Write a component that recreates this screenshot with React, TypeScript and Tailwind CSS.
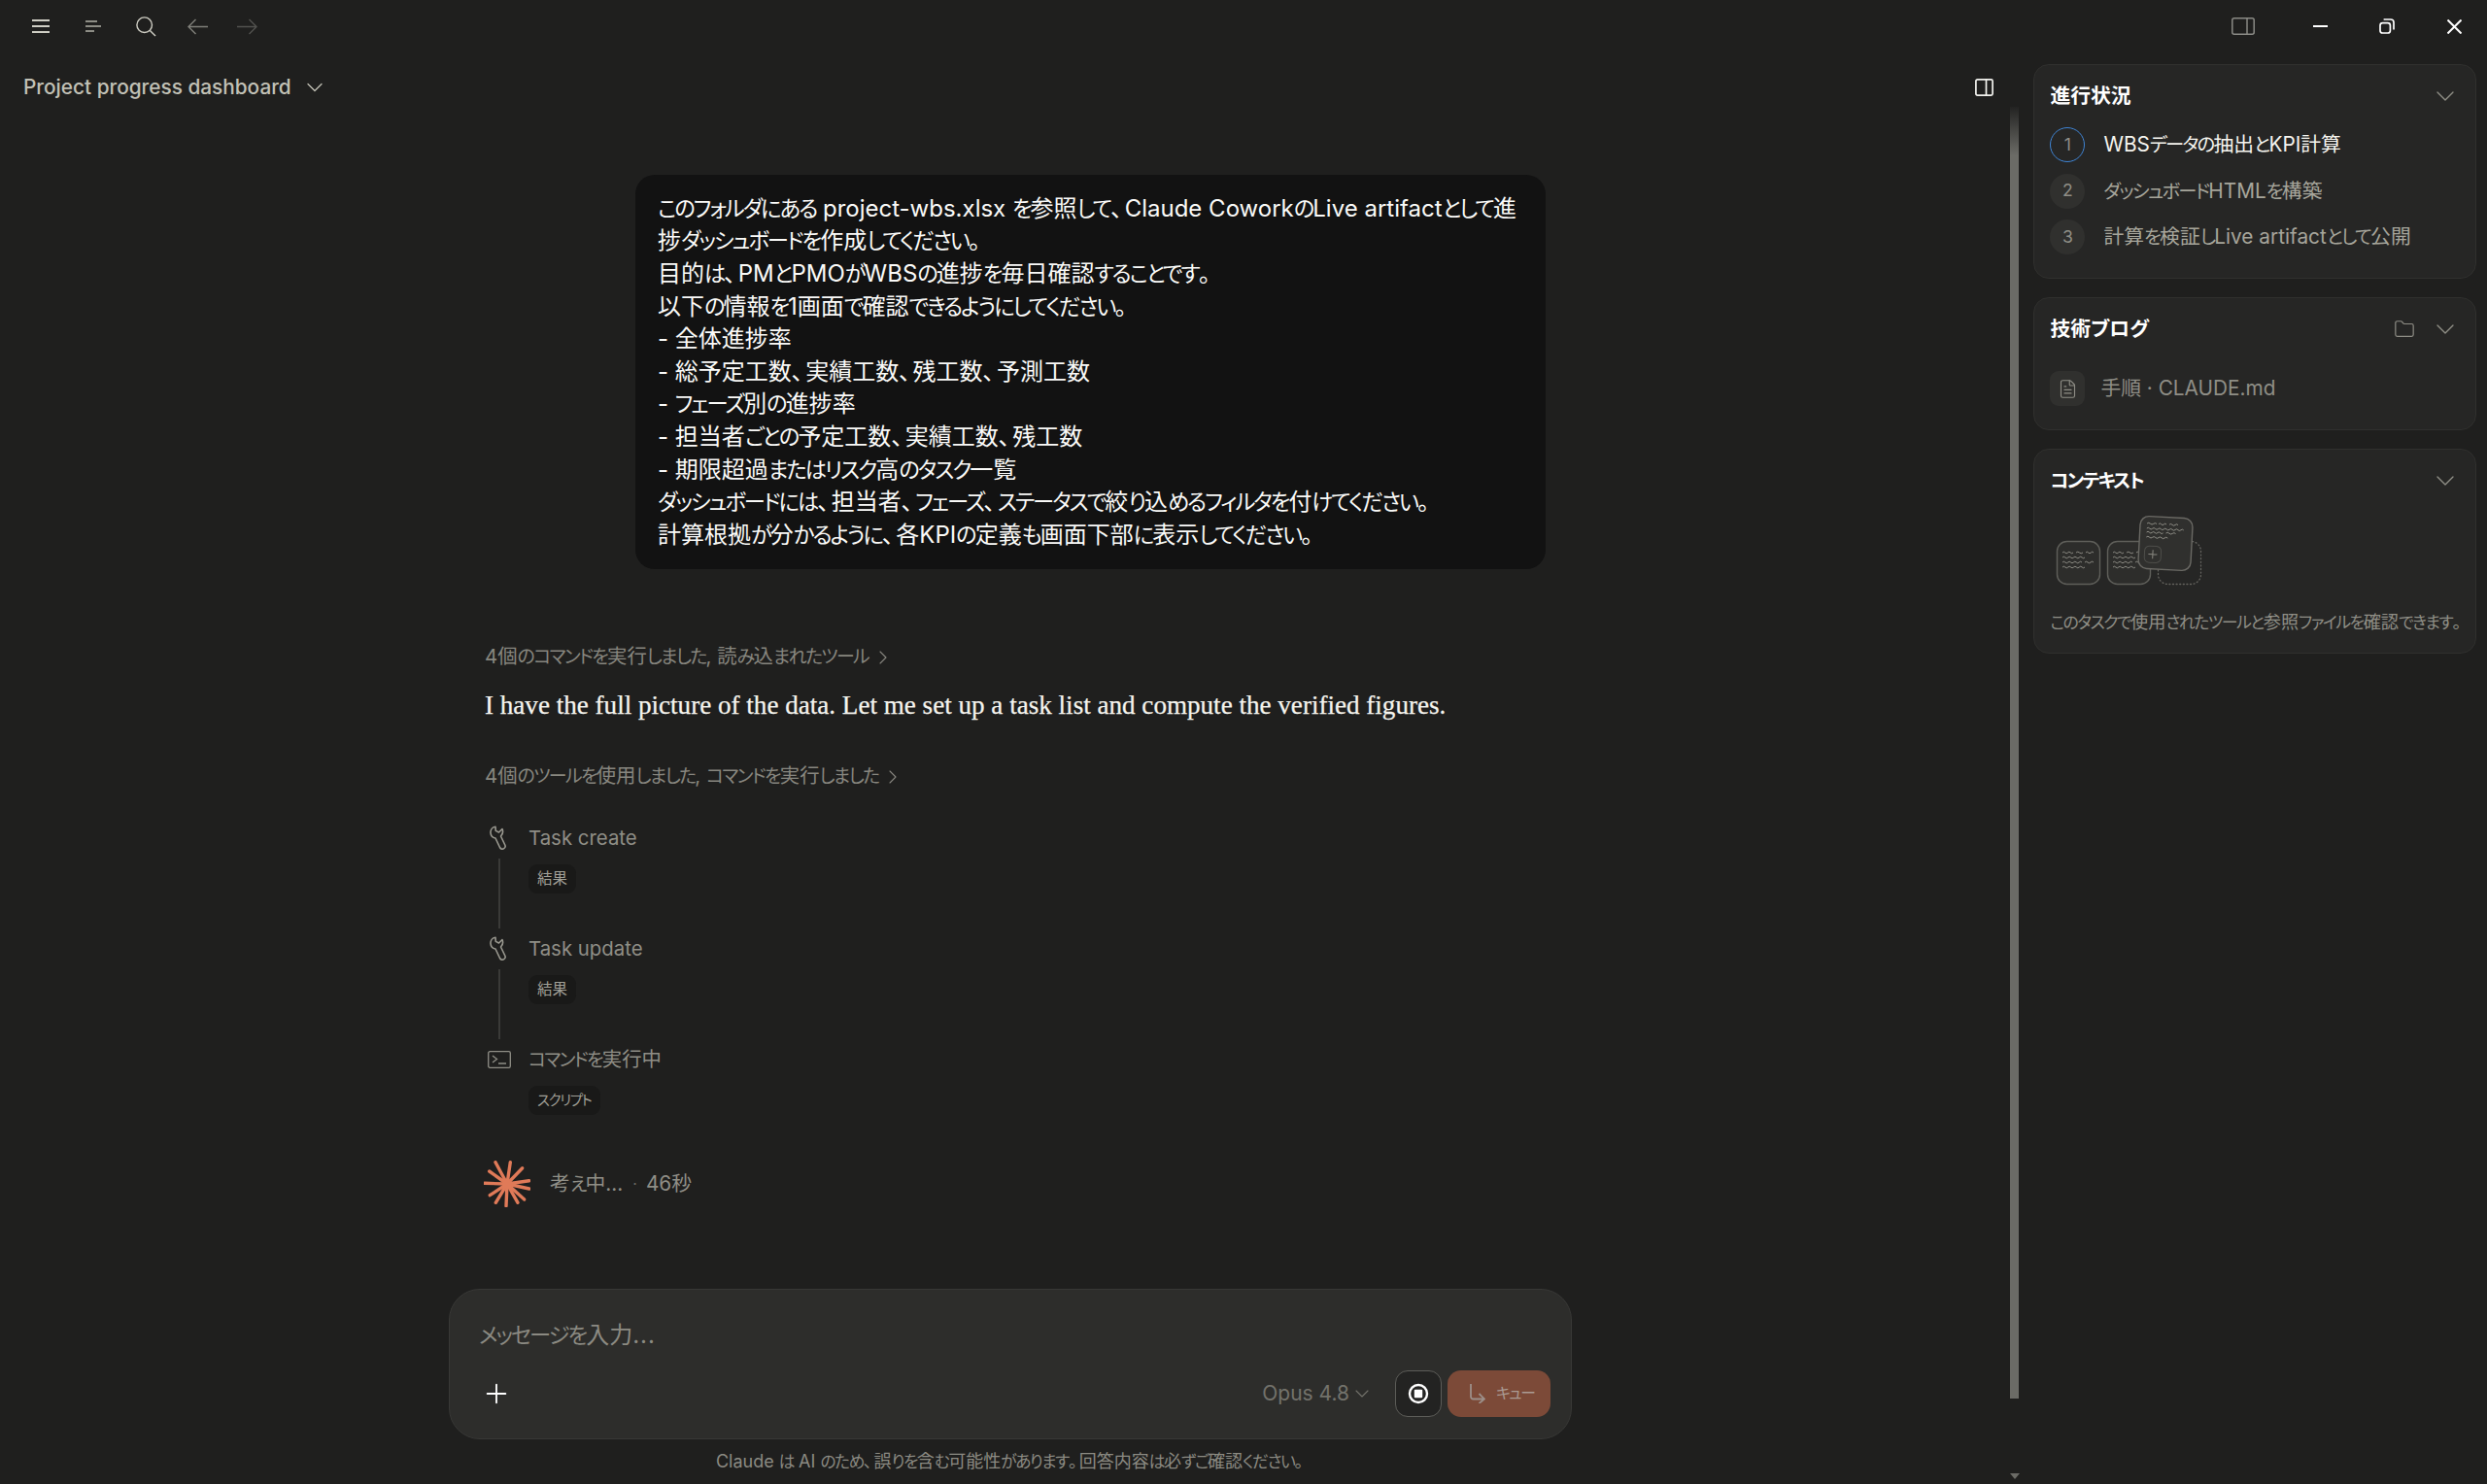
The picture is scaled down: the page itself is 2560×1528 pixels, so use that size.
import React from "react";
import { ChevronDown, ChevronRight, Plus, FileText, Folder } from "lucide-react";

function J({ t }: { t: string }) {
  return (
    <>
      {t.split(/([\u3041-\u30ff]+|[、。])/).map((s, i) =>
        i % 2 === 0 ? (
          <React.Fragment key={i}>{s}</React.Fragment>
        ) : s === "、" || s === "。" ? (
          <span key={i} className="mr-[0.1em]">{s}</span>
        ) : (
          <span key={i} className="text-[0.93em] tracking-[-0.09em]">{s}</span>
        )
      )}
    </>
  );
}

const prompt = [
  "このフォルダにある project-wbs.xlsx を参照して、Claude CoworkのLive artifactとして進",
  "捗ダッシュボードを作成してください。",
  "目的は、PMとPMOがWBSの進捗を毎日確認することです。",
  "以下の情報を1画面で確認できるようにしてください。",
  "- 全体進捗率",
  "- 総予定工数、実績工数、残工数、予測工数",
  "- フェーズ別の進捗率",
  "- 担当者ごとの予定工数、実績工数、残工数",
  "- 期限超過またはリスク高のタスク一覧",
  "ダッシュボードには、担当者、フェーズ、ステータスで絞り込めるフィルタを付けてください。",
  "計算根拠が分かるように、各KPIの定義も画面下部に表示してください。",
];

const rays: [number, number][] = [
  [-12, -22.3], [3.3, -22.3], [15.7, -16.3], [22.7, -3.3], [22.7, 5], [17.7, 16],
  [11, 19.3], [-1, 22.7], [-11.7, 19.3], [-17.7, 11.7], [-23.3, -0.7], [-18.3, -13],
];

function wave(x: number, y: number, w: number) {
  const n = Math.max(1, Math.round(w / 3));
  let d = `M${x} ${y}q${w / n / 2} -1.6 ${w / n} 0`;
  for (let i = 1; i < n; i++) d += `t${w / n} 0`;
  return d;
}

function Lines({ segs }: { segs: [number, number, number][] }) {
  return (
    <path
      d={segs.map(([a, b, y]) => wave(a, y, b - a)).join("")}
      fill="none"
      stroke="#a3a299"
      strokeWidth="0.8"
    />
  );
}

const small = (o: number): [number, number, number][] => [
  [14 + o, 25 + o, 44], [28 + o, 35 + o, 44], [38 + o, 46 + o, 44],
  [14 + o, 37 + o, 49],
  [14 + o, 34 + o, 54], [37 + o, 46 + o, 54],
  [14 + o, 37 + o, 59],
];

function Illustration() {
  return (
    <svg width="160" height="80" viewBox="0 0 160 80" className="-ml-[1px]">
      <rect x="8.5" y="32.5" width="44" height="44" rx="10" fill="#2d2d2b" stroke="#5f5f5a" strokeWidth="1.4" />
      <Lines segs={small(0)} />
      <rect x="60.5" y="32.5" width="44" height="44" rx="10" fill="#2d2d2b" stroke="#5f5f5a" strokeWidth="1.4" />
      <Lines segs={small(52)} />
      <rect x="112.5" y="32.5" width="44" height="44" rx="10" fill="none" stroke="#65645f" strokeWidth="1.3" strokeDasharray="1 2.6" strokeLinecap="round" />
      <g transform="rotate(3 120 35)">
        <rect x="93" y="7.5" width="54" height="54" rx="9" fill="#30302e" stroke="#6a6964" strokeWidth="1.4" />
        <Lines segs={[[100, 110, 15], [112, 120, 15], [123, 132, 15], [100, 138, 20], [100, 117, 24], [120, 130, 24], [100, 122, 29]]} />
        <rect x="99" y="38" width="17" height="17" rx="5" fill="none" stroke="#4e4e4a" strokeWidth="1" />
        <path d="M107.5 42v9M103 46.5h9" stroke="#8a8982" strokeWidth="1" />
      </g>
    </svg>
  );
}

function Tool({ icon, label, tag, line }: { icon: React.ReactNode; label: string; tag: string; line?: boolean }) {
  return (
    <div className="flex h-[114px]">
      <div className="flex w-[30px] flex-col items-center">
        <div className="flex h-[30px] items-center justify-center">{icon}</div>
        {line && <div className="mt-[6px] h-[72px] w-[2px] bg-[#3a3a38]" />}
      </div>
      <div className="ml-[15px] flex flex-col items-start">
        <div className="flex h-[30px] items-center pt-[2px] text-[20.4px] text-[#8f8e86]"><span><J t={label} /></span></div>
        <div className="mt-[12px] flex h-[30px] items-center rounded-[9px] bg-[#191918] px-[9px] text-[15.5px] text-[#a09f96]"><span><J t={tag} /></span></div>
      </div>
    </div>
  );
}

function CardHead({ title, extra }: { title: React.ReactNode; extra?: React.ReactNode }) {
  return (
    <div className="flex h-[32px] items-center">
      <span className="text-[20.8px] font-semibold text-white">{title}</span>
      <div className="ml-auto flex items-center">
        {extra}
        <ChevronDown size={32} strokeWidth={1} className="text-[#8f8e86]" />
      </div>
    </div>
  );
}

const WrenchIcon = () => (
  <svg width="17" height="25" viewBox="0 0 17 25" fill="none" stroke="#9a9990" strokeWidth="1.6" strokeLinejoin="round" className="mr-[3px]">
    <path d="M6 1.2C2.6 1.6.8 4.5 1 7.5c.2 3 2.4 5 5 5.5l4.5 9.5c.8 1.5 2.5 2 4 1.3 1.5-.8 2-2.3 1.3-3.8L11.5 11c2-2 2.5-5 1.5-7.5L9.5 7 6.3 5.4z" />
  </svg>
);

const card = "rounded-[16px] border-[1.6px] border-[#30302e] bg-[#262625] pt-[16px] pl-[16.4px] pr-[15px]";

export default function App() {
  return (
    <div className="flex h-[1528px] w-[2560px] flex-col overflow-hidden bg-[#1f1f1e] font-[Inter,'Noto_Sans_CJK_JP',sans-serif] [font-feature-settings:'palt'] text-white">
      {/* title bar */}
      <header className="flex h-[54px] shrink-0 items-center pl-[33px] pr-[26px]">
        <svg width="18" height="16" viewBox="0 0 18 16" stroke="#cfcec4" strokeWidth="2">
          <path d="M0 2h18M0 8h18M0 14h18" />
        </svg>
        <svg width="16" height="14" viewBox="0 0 16 14" className="ml-[37px]" stroke="#b3b2a8" strokeWidth="1.3">
          <path d="M0 2h12M0 7h16M0 12h9" />
        </svg>
        <svg width="21" height="21" viewBox="0 0 21 21" fill="none" stroke="#cfcec4" strokeWidth="1.4" className="ml-[36px]">
          <circle cx="8.7" cy="8.7" r="7.8" />
          <path d="M14.4 14.4L20 20" />
        </svg>
        <svg width="21" height="17" viewBox="0 0 21 17" fill="none" stroke="#80807a" strokeWidth="1.4" className="ml-[32px]">
          <path d="M21 8.5H1M8.5 1L1 8.5L8.5 16" />
        </svg>
        <svg width="21" height="17" viewBox="0 0 21 17" fill="none" stroke="#52524f" strokeWidth="1.4" className="ml-[30px]">
          <path d="M0 8.5h20M12.5 1L20 8.5L12.5 16" />
        </svg>
        <svg width="24" height="18" viewBox="0 0 24 18" fill="none" stroke="#8a8a85" strokeWidth="1.5" className="ml-auto">
          <rect x="0.8" y="0.8" width="22.4" height="16.4" rx="2" />
          <path d="M16 1v16" />
        </svg>
        <svg width="15" height="4" viewBox="0 0 15 4" stroke="#fff" strokeWidth="2" className="ml-[60px]">
          <path d="M0 2h15" />
        </svg>
        <svg width="16" height="16" viewBox="0 0 16 16" fill="none" stroke="#fff" strokeWidth="1.7" className="ml-[53px]">
          <rect x="1" y="4.6" width="10.4" height="10.4" rx="2.6" />
          <path d="M4.6 1h7.2a3.2 3.2 0 0 1 3.2 3.2v7.2" />
        </svg>
        <svg width="15" height="15" viewBox="0 0 15 15" stroke="#fff" strokeWidth="2" className="ml-[54px]">
          <path d="M0.5 0.5l14 14M14.5 0.5l-14 14" />
        </svg>
      </header>

      <div className="flex min-h-0 flex-1">
        {/* conversation */}
        <main className="flex w-[2069px] shrink-0 flex-col">
          <div className="flex h-[72px] shrink-0 items-center pl-[24px] pr-[17px]">
            <span className="text-[20.8px] font-medium text-[#c2c1b6]">Project progress dashboard</span>
            <ChevronDown size={28} strokeWidth={1.1} className="ml-[10px] text-[#c2c1b6]" />
            <svg width="19" height="18" viewBox="0 0 19 18" fill="none" stroke="#f2f2ee" strokeWidth="1.7" className="ml-auto">
              <rect x="0.9" y="0.9" width="17.2" height="16.2" rx="1.6" />
              <path d="M11.5 1v16" />
            </svg>
          </div>

          <div className="flex w-[1618px] flex-col pl-[462px]">
            <div className="ml-[191.5px] mt-[53.5px] w-[937.5px] rounded-[20px] bg-[#121212] py-[18.5px] pl-[23.5px] text-[24px] text-[#fafaf8]">
              {prompt.map((l) => (
                <div key={l} className="flex h-[33.6px] items-center whitespace-nowrap"><span><J t={l} /></span></div>
              ))}
            </div>

            <div className="pl-[37px]">
              <div className="mt-[74.5px] flex h-[32px] items-center text-[20.4px] text-[#87867f]">
                <span><J t="4個のコマンドを実行しました, 読み込まれたツール" /></span>
                <ChevronRight size={24} strokeWidth={1.1} className="ml-[3px]" />
              </div>
              <div className="mt-[14px] flex h-[40px] items-center font-['Liberation_Serif',serif] text-[27.1px] text-[#f5f4ee] [-webkit-text-stroke:0.25px_#f5f4ee]">
                I have the full picture of the data. Let me set up a task list and compute the verified figures.
              </div>
              <div className="mt-[37px] flex h-[32px] items-center text-[20.4px] text-[#87867f]">
                <span><J t="4個のツールを使用しました, コマンドを実行しました" /></span>
                <ChevronRight size={24} strokeWidth={1.1} className="ml-[3px]" />
              </div>

              <div className="mt-[32px]">
                <Tool icon={<WrenchIcon />} label="Task create" tag="結果" line />
                <Tool icon={<WrenchIcon />} label="Task update" tag="結果" line />
                <Tool
                  icon={
                    <svg width="24" height="18" viewBox="0 0 24 18" fill="none" stroke="#8f8e86" strokeWidth="1.3">
                      <rect x="0.7" y="0.7" width="22.6" height="16.6" rx="1.6" />
                      <path d="M5 5l4.5 3.5L5 12M11 13h8" />
                    </svg>
                  }
                  label="コマンドを実行中"
                  tag="スクリプト"
                />
              </div>

              <div className="mt-[5px] flex h-[48px] items-center">
                <svg width="48" height="48" viewBox="-24 -24 48 48" stroke="#e07a58" strokeWidth="3.4" strokeLinecap="round" className="-ml-[1px]">
                  {rays.map(([x, y]) => (
                    <line key={`${x}${y}`} x1="0" y1="0" x2={x} y2={y} />
                  ))}
                  <circle r="5" fill="#e07a58" stroke="none" />
                </svg>
                <span className="ml-[20px] text-[20.8px] text-[#8f8e86]"><J t="考え中..." /></span>
                <span className="ml-[10px] text-[16px] text-[#6a6964]">·</span>
                <span className="ml-[9px] text-[20.8px] text-[#8f8e86]">46秒</span>
              </div>
            </div>

            <div className="mt-[84px] flex h-[155px] flex-col rounded-[32px] border-[1.6px] border-[#383836] bg-[#2d2d2b] pl-[30px] pr-[21px] pt-[31px]">
              <div className="flex h-[32px] items-center text-[24px] text-[#8b8a82]">
                <span><J t="メッセージを入力" /><span className="tracking-[1px]">...</span></span>
              </div>
              <div className="mt-[20px] flex h-[48px] items-center">
                <div className="flex w-[36px] items-center justify-center">
                  <Plus size={32} strokeWidth={1.4} className="shrink-0 text-white" />
                </div>
                <div className="ml-auto flex items-center text-[21px] text-[#73726b]">
                  Opus 4.8
                  <ChevronDown size={24} strokeWidth={1.1} className="ml-[1px]" />
                </div>
                <div className="ml-[22px] flex h-[48px] w-[48px] items-center justify-center rounded-[13px] border-[1.3px] border-[#5c5c58] bg-[#232322]">
                  <svg width="22" height="22" viewBox="0 0 22 22">
                    <circle cx="11" cy="11" r="9" fill="none" stroke="#fff" strokeWidth="2.4" />
                    <rect x="6.8" y="6.8" width="8.4" height="8.4" rx="1" fill="#fff" />
                  </svg>
                </div>
                <div className="ml-[6px] flex h-[48px] w-[106px] items-center rounded-[14px] bg-[#7c4a38] pl-[23px] text-[17px] text-[#ab9b93]">
                  <svg width="16" height="20" viewBox="0 0 16 20" fill="none" stroke="#9c8f89" strokeWidth="1.8">
                    <path d="M1 0v13a2.5 2.5 0 0 0 2.5 2.5H15M9.5 10L15 15.5L9.5 20" />
                  </svg>
                  <span className="ml-[11px]"><J t="キュー" /></span>
                </div>
              </div>
            </div>

            <div className="mt-[9px] flex h-[28px] items-center justify-center text-[18px] text-[#8b8a82]">
              <span><J t="Claude は AI のため、誤りを含む可能性があります。回答内容は必ずご確認ください。" /></span>
            </div>
          </div>
        </main>

        {/* scrollbar */}
        <div className="flex w-[9px] shrink-0 flex-col items-center">
          <div className="mt-[56px] h-[1330px] w-[9px] bg-[linear-gradient(to_bottom,#232322_0px,#6b6b66_50px,#6b6b66_100%)]" />
          <div className="mb-[5px] mt-auto h-0 w-0 border-x-[5px] border-t-[6px] border-x-transparent border-t-[#6b6b66]" />
        </div>

        {/* right rail */}
        <aside className="ml-[15px] mt-[12px] flex w-[456px] shrink-0 flex-col gap-[19px]">
          <section className={`${card} h-[221px]`}>
            <CardHead title="進行状況" />
            <div className="mt-[16px] flex flex-col gap-[11.5px]">
              <div className="flex items-center text-[20.8px] text-[#f5f4ee]">
                <div className="flex h-[36px] w-[36px] items-center justify-center rounded-full border-[1.3px] border-[#3f84d4] text-[17.6px] text-[#8f8e86]">1</div>
                <span className="ml-[19px]"><J t="WBSデータの抽出とKPI計算" /></span>
              </div>
              <div className="flex items-center text-[20.8px] text-[#a6a59b]">
                <div className="flex h-[36px] w-[36px] items-center justify-center rounded-full bg-[#30302e] text-[17.6px] text-[#8f8e86]">2</div>
                <span className="ml-[19px]"><J t="ダッシュボードHTMLを構築" /></span>
              </div>
              <div className="flex items-center text-[20.8px] text-[#a6a59b]">
                <div className="flex h-[36px] w-[36px] items-center justify-center rounded-full bg-[#30302e] text-[17.6px] text-[#8f8e86]">3</div>
                <span className="ml-[19px]"><J t="計算を検証しLive artifactとして公開" /></span>
              </div>
            </div>
          </section>

          <section className={`${card} h-[137px]`}>
            <CardHead
              title="技術ブログ"
              extra={<Folder size={22} strokeWidth={1.3} className="mr-[15px] text-[#8f8e86]" />}
            />
            <div className="mt-[27px] flex items-center">
              <div className="flex h-[36px] w-[36px] items-center justify-center rounded-[9px] bg-[#30302e]">
                <FileText size={21} strokeWidth={1.3} className="text-[#8f8e86]" />
              </div>
              <span className="ml-[16px] text-[20.8px] text-[#8f8e86]">手順 · CLAUDE.md</span>
            </div>
          </section>

          <section className={`${card} h-[211px]`}>
            <CardHead title={<J t="コンテキスト" />} />
            <div className="mt-[14px]">
              <Illustration />
            </div>
            <div className="mt-[22px] whitespace-nowrap text-[18.2px] text-[#8f8e86]">
              <J t="このタスクで使用されたツールと参照ファイルを確認できます。" />
            </div>
          </section>
        </aside>
      </div>
    </div>
  );
}
